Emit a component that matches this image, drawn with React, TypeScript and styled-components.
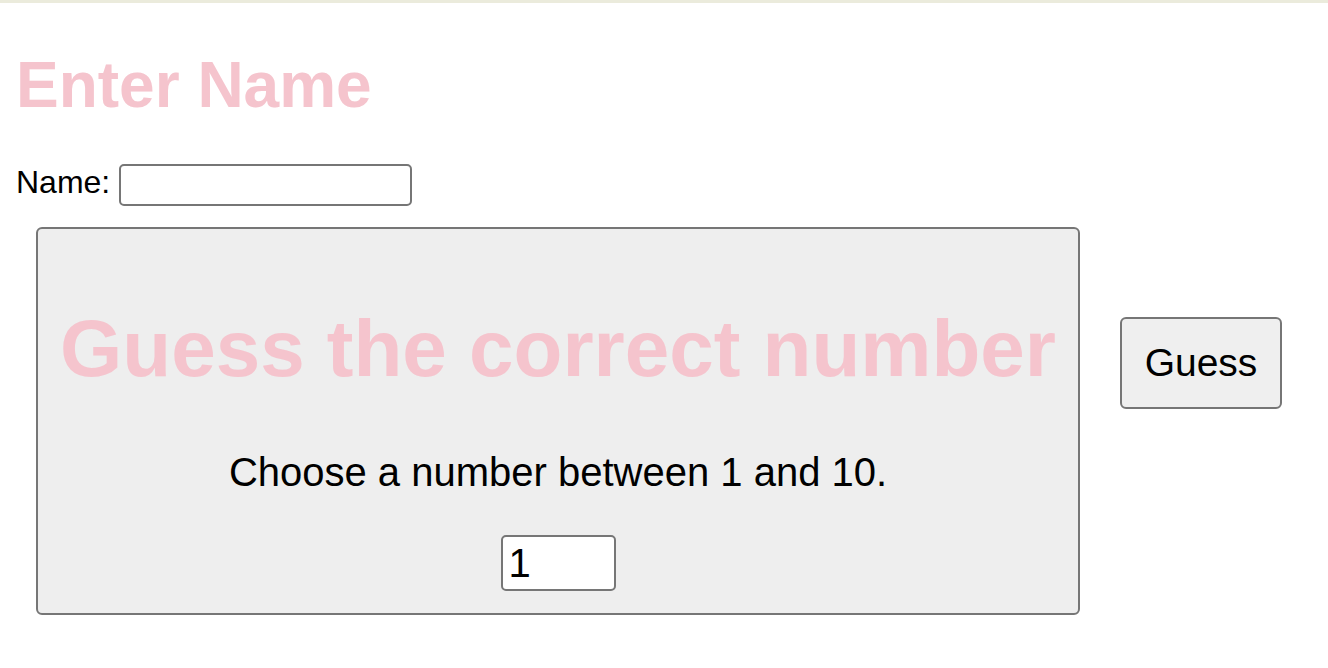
import React, { useState } from "react"
import styled, { createGlobalStyle } from "styled-components"

const GlobalStyle = createGlobalStyle`
	html, body {
		margin: 0;
		padding: 0;
		background: #ffffff;
	}
	body {
		font-family: "Liberation Sans", Arial, Helvetica, sans-serif;
		color: #000000;
	}
`

const Page = styled.div`
	border-top: 3px solid #ebebdc;
	padding: 0 16px;
	width: 1328px;
	height: 665px;
	box-sizing: border-box;
	overflow: hidden;
`

const Title = styled.h1<{ $size: number }>`
	margin: 0;
	font-size: ${(p) => p.$size}px;
	line-height: ${(p) => p.$size}px;
	font-weight: 700;
	color: #f5c4cd;
`

const PageTitle = styled(Title)`
	margin-top: 50px;
`

const NameRow = styled.div`
	display: flex;
	align-items: flex-start;
	margin-top: 47px;
`

const Label = styled.label`
	font-size: 32px;
	line-height: 32px;
	margin-top: 2px;
	margin-right: 9px;
`

const TextField = styled.input<{ $w: number; $h: number; $fs?: number }>`
	box-sizing: border-box;
	width: ${(p) => p.$w}px;
	height: ${(p) => p.$h}px;
	border: 2px solid #767676;
	border-radius: 5px;
	background: #ffffff;
	padding: 0 6px;
	margin: 0;
	font-family: "Liberation Sans", Arial, sans-serif;
	font-size: ${(p) => p.$fs ?? 28}px;
	color: #000000;
	outline: none;
`

const GameRow = styled.div`
	display: flex;
	align-items: flex-start;
	margin-top: 21px;
	margin-left: 20px;
	gap: 40px;
`

const Card = styled.div`
	box-sizing: border-box;
	width: 1044px;
	height: 388px;
	border: 2px solid #767676;
	border-radius: 6px;
	background: #eeeeee;
	padding-top: 80px;
	display: flex;
	flex-direction: column;
	align-items: center;
`

const CardTitle = styled(Title)`
	text-align: center;
	white-space: nowrap;
`

const Prompt = styled.p`
	margin: 63px 0 0;
	font-size: 40px;
	line-height: 40px;
`

const NumberBox = styled.div`
	margin-top: 43px;
`

const GuessButton = styled.button`
	box-sizing: border-box;
	width: 162px;
	height: 92px;
	margin-top: 90px;
	border: 2px solid #767676;
	border-radius: 6px;
	background: #efefef;
	font-family: "Liberation Sans", Arial, sans-serif;
	font-size: 39px;
	color: #000000;
	padding: 0;
	cursor: pointer;
`

export default function App() {
	const [name, setName] = useState("")
	const [guess, setGuess] = useState("1")

	return (
		<>
			<GlobalStyle />
			<Page>
				<PageTitle $size={64}>Enter Name</PageTitle>
				<NameRow>
					<Label htmlFor="name">Name:</Label>
					<TextField id="name" $w={293} $h={42} value={name} onChange={(e) => setName(e.target.value)} />
				</NameRow>
				<GameRow>
					<Card>
						<CardTitle $size={80}>Guess the correct number</CardTitle>
						<Prompt>Choose a number between 1 and 10.</Prompt>
						<NumberBox>
							<TextField
								$w={115}
								$h={56}
								$fs={40}
								value={guess}
								onChange={(e) => setGuess(e.target.value)}
							/>
						</NumberBox>
					</Card>
					<GuessButton>Guess</GuessButton>
				</GameRow>
			</Page>
		</>
	)
}
